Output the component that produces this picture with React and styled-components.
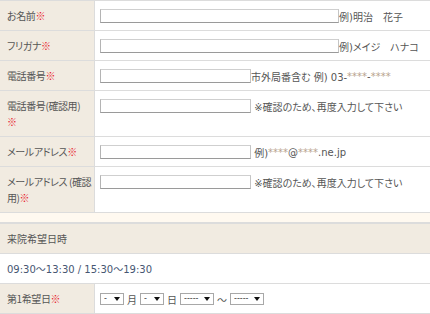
import React from 'react'
import styled, { createGlobalStyle } from 'styled-components'

const GlobalStyle = createGlobalStyle`
  body {
    margin: 0;
    background: #fff;
    font-family: "DejaVu Sans", "Noto Sans CJK JP", sans-serif;
    font-size: 10px;
    color: #555;
    font-feature-settings: "palt";
  }
`

const jp = `"Noto Sans CJK JP", "DejaVu Sans", sans-serif`

const Table = styled.div`
  border-top: 1px solid #dcdcdc;
`

const Row = styled.div`
  display: grid;
  grid-template-columns: 95px 1fr;
  border-bottom: 1px solid #dcdcdc;
`

const Label = styled.div`
  background: #f1ebe1;
  border-right: 1px solid #dcdcdc;
  padding: 7px 3px 6px 7px;
  font-family: ${jp};
  line-height: 16px;
  letter-spacing: -0.4px;
  white-space: nowrap;
`

const Req = styled.span`
  color: #e8202a;
`

const Value = styled.div`
  padding: 7px 5px 6px;
`

const Field = styled.div`
  display: flex;
  align-items: center;
  height: 16px;
  white-space: pre;
  gap: ${(p) => p.gap || 0}px;
`

const Input = styled.input`
  box-sizing: border-box;
  width: ${(p) => p.w}px;
  height: 14px;
  margin: 0;
  padding: 0 2px;
  background: #fff;
  border: 1px solid #cfcfcf;
  border-left-color: #b4b4b4;
  border-bottom-color: #9a9a9a;
  border-right-color: #c4c4c4;
  font-size: 10px;
`

const Mask = styled.span`
  color: #b8a48c;
`

const Spacer = styled.div`
  height: 9px;
  background: #fff9f0;
  border-bottom: 1px solid #dcdcdc;
`

const Band = styled.div`
  display: flex;
  align-items: center;
  height: 29px;
  padding: 0 7px;
  background: ${(p) => (p.shaded ? '#f1ebe1' : '#fff')};
  color: ${(p) => (p.shaded ? '#555' : '#465672')};
  font-family: ${(p) => (p.shaded ? jp : 'inherit')};
  border-bottom: 1px solid #dcdcdc;
`

const SelectBox = styled.span`
  position: relative;
  display: inline-flex;
  box-sizing: border-box;
  width: ${(p) => p.w}px;
  height: 12px;
  border: 1px solid #a8a8a8;
  background: #fff;
`

const Select = styled.select`
  appearance: none;
  width: 100%;
  height: 10px;
  border: 0;
  margin: 0;
  padding: 0 0 0 3px;
  background: transparent;
  font-family: "DejaVu Sans", sans-serif;
  font-size: 8px;
  line-height: 10px;
  color: #333;
  outline: none;
`

const Arrow = styled.span`
  position: absolute;
  right: 3px;
  top: 3px;
  width: 0;
  height: 0;
  border-left: 3px solid transparent;
  border-right: 3px solid transparent;
  border-top: 4px solid #111;
  pointer-events: none;
`

const Unit = styled.span`
  font-family: ${jp};
  color: #555;
`

const DropDown = ({ w, options }) => (
  <SelectBox w={w}>
    <Select defaultValue={options[0]}>
      {options.map((o) => <option key={o}>{o}</option>)}
    </Select>
    <Arrow />
  </SelectBox>
)

const months = ['-', ...Array.from({ length: 12 }, (_, i) => String(i + 1))]
const days = ['-', ...Array.from({ length: 31 }, (_, i) => String(i + 1))]
const times = ['-----', '09:30', '10:00', '10:30', '11:00', '15:30', '16:00']

const DateRow = ({ label }) => (
  <Row>
    <Label>{label}<Req>※</Req></Label>
    <Value>
      <Field gap={3}>
        <DropDown w={24} options={months} />
        <Unit>月</Unit>
        <DropDown w={24} options={days} />
        <Unit>日</Unit>
        <DropDown w={34} options={times} />
        <Unit>〜</Unit>
        <DropDown w={34} options={times} />
      </Field>
    </Value>
  </Row>
)

export default function App() {
  return (
    <>
      <GlobalStyle />
      <Table>
        <Row>
          <Label>お名前<Req>※</Req></Label>
          <Value><Field><Input w={239} />例)明治　花子</Field></Value>
        </Row>
        <Row>
          <Label>フリガナ<Req>※</Req></Label>
          <Value><Field><Input w={239} />例)メイジ　ハナコ</Field></Value>
        </Row>
        <Row>
          <Label>電話番号<Req>※</Req></Label>
          <Value>
            <Field><Input w={151} />市外局番含む 例) 03-<Mask>****</Mask>-<Mask>****</Mask></Field>
          </Value>
        </Row>
        <Row>
          <Label>電話番号(確認用)<br /><Req>※</Req></Label>
          <Value><Field><Input w={151} /> ※確認のため、再度入力して下さい</Field></Value>
        </Row>
        <Row>
          <Label>メールアドレス<Req>※</Req></Label>
          <Value>
            <Field><Input w={151} /> 例)<Mask>****</Mask>@<Mask>****</Mask>.ne.jp</Field>
          </Value>
        </Row>
        <Row>
          <Label>メールアドレス (確認<br />用)<Req>※</Req></Label>
          <Value><Field><Input w={151} /> ※確認のため、再度入力して下さい</Field></Value>
        </Row>
      </Table>
      <Spacer />
      <Table>
        <Band shaded>来院希望日時</Band>
        <Band>09:30〜13:30 / 15:30〜19:30</Band>
        <DateRow label="第1希望日" />
        <DateRow label="第2希望日" />
      </Table>
    </>
  )
}
